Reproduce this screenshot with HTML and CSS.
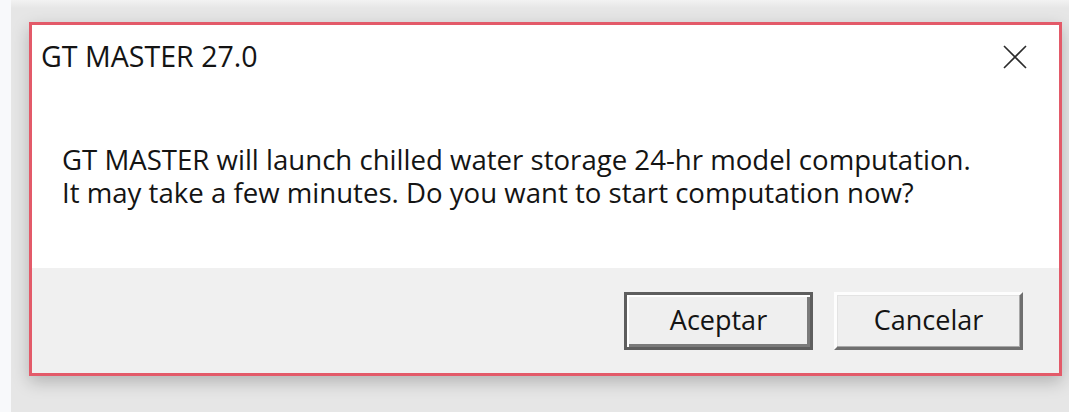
FILE: index.html
```html
<!DOCTYPE html>
<html lang="es">
<head>
<meta charset="utf-8">
<title>GT MASTER 27.0</title>
<link rel="stylesheet" href="styles.css">
</head>
<body>
<div class="screen">
  <div class="edge"></div>
  <div class="desk">
    <div class="dialog">
      <div class="titlebar">
        <span class="title">GT MASTER 27.0</span>
        <button class="close" aria-label="Cerrar">
          <svg width="24" height="24" viewBox="0 0 24 24">
            <path d="M1 1 L23 23 M23 1 L1 23" stroke="#2b2b2b" stroke-width="1.6" fill="none"/>
          </svg>
        </button>
      </div>
      <div class="content">
        <p class="message">GT MASTER will launch chilled water storage 24-hr model computation.<br>It may take a few minutes. Do you want to start computation now?</p>
      </div>
      <div class="footer">
        <button class="btn btn-default">Aceptar</button>
        <button class="btn">Cancelar</button>
      </div>
    </div>
  </div>
</div>
</body>
</html>
```
FILE: styles.css
```css
html, body {
  margin: 0;
  padding: 0;
  height: 100%;
}

body {
  font-family: "Open Sans", "Noto Sans", sans-serif;
  color: #141414;
}

.screen {
  display: flex;
  width: 1069px;
  height: 412px;
  overflow: hidden;
}

.edge {
  width: 11px;
  background: #f8f9fb;
}

.desk {
  flex: 1;
  background: linear-gradient(#f2f2f2 0, #e6e6e6 8px, #e6e6e6 100%);
  padding: 22px 0 0 18px;
}

.dialog {
  width: 1027px;
  height: 348px;
  border: 3px solid #e35a69;
  background: #ffffff;
  display: flex;
  flex-direction: column;
  box-shadow: 0 6px 16px rgba(0, 0, 0, 0.22);
}

.titlebar {
  height: 63px;
  display: flex;
  align-items: center;
  justify-content: space-between;
  padding: 0 0 0 9px;
}

.title {
  font-size: 28.6px;
  line-height: 1;
  margin-top: -1px;
}

.close {
  width: 60px;
  height: 60px;
  border: 0;
  background: transparent;
  display: flex;
  align-items: center;
  justify-content: center;
  margin-right: 14px;
  padding: 0;
}

.content {
  height: 180px;
  padding: 0 0 0 30px;
}

.message {
  margin: 0;
  padding-top: 55px;
  font-size: 27.6px;
  line-height: 33px;
}

.footer {
  flex: 1;
  background: #f0f0f0;
  display: flex;
  justify-content: flex-end;
  align-items: flex-start;
  gap: 21px;
  padding: 24px 36px 0 0;
}

.btn {
  width: 189px;
  height: 58px;
  font-family: inherit;
  font-size: 27px;
  color: #141414;
  background: #efefef;
  border: 3px solid;
  border-color: #fdfdfd #6f6f6f #6f6f6f #fdfdfd;
  box-shadow: inset -1px -1px 0 #a8a8a8, inset 1px 1px 0 #e3e3e3;
  padding: 0 0 4px 0;
}

.btn-default {
  border: 3px solid #5e5e5e;
  box-shadow: inset 2px 2px 0 #ffffff, inset -3px -3px 0 #7a7a7a;
}
```
